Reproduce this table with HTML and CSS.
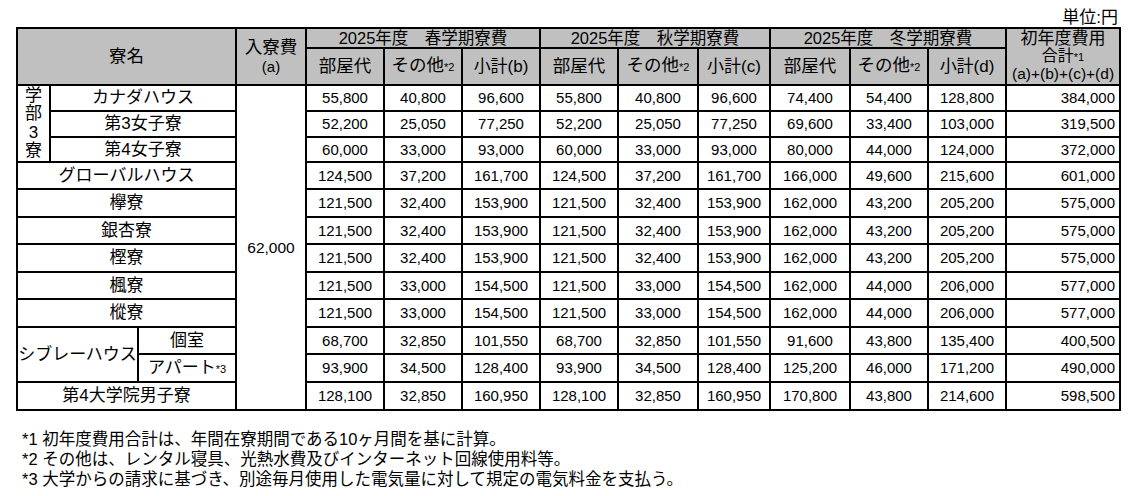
FILE: index.html
```html
<!DOCTYPE html>
<html lang="ja">
<head>
<meta charset="utf-8">
<title>寮費一覧</title>
<link rel="stylesheet" href="styles.css">
</head>
<body>
<div class="page">
  <div class="unit">単位:円</div>
  <table class="fees">
    <colgroup>
      <col class="c-a"><col class="c-b"><col class="c-c"><col class="c-d">
      <col class="c-n"><col class="c-n"><col class="c-n">
      <col class="c-n"><col class="c-n2"><col class="c-n3">
      <col class="c-n2"><col class="c-n"><col class="c-n">
      <col class="c-t">
    </colgroup>
    <thead>
      <tr class="h1">
        <th colspan="3" rowspan="2" class="big">寮名</th>
        <th rowspan="2" class="entry"><span class="big">入寮費</span><br><span class="sub">(a)</span></th>
        <th colspan="3">2025年度　春学期寮費</th>
        <th colspan="3">2025年度　秋学期寮費</th>
        <th colspan="3">2025年度　冬学期寮費</th>
        <th rowspan="2" class="total-h"><span class="tl">初年度費用</span><span class="tl mid">合計<small>*1</small></span><span class="tl formula">(a)+(b)+(c)+(d)</span></th>
      </tr>
      <tr class="h2">
        <th class="big">部屋代</th><th class="big">その他<small>*2</small></th><th class="sum">小計(b)</th>
        <th class="big">部屋代</th><th class="big">その他<small>*2</small></th><th class="sum">小計(c)</th>
        <th class="big">部屋代</th><th class="big">その他<small>*2</small></th><th class="sum">小計(d)</th>
      </tr>
    </thead>
    <tbody>
      <tr class="r26">
        <td rowspan="3" class="vert">学<br>部<br>3<br>寮</td>
        <td colspan="2" class="name">カナダハウス</td>
        <td rowspan="12" class="entry-v">62,000</td>
        <td>55,800</td><td>40,800</td><td>96,600</td>
        <td>55,800</td><td>40,800</td><td>96,600</td>
        <td>74,400</td><td>54,400</td><td>128,800</td>
        <td class="tot">384,000</td>
      </tr>
      <tr class="r26">
        <td colspan="2" class="name">第3女子寮</td>
        <td>52,200</td><td>25,050</td><td>77,250</td>
        <td>52,200</td><td>25,050</td><td>77,250</td>
        <td>69,600</td><td>33,400</td><td>103,000</td>
        <td class="tot">319,500</td>
      </tr>
      <tr class="r25">
        <td colspan="2" class="name">第4女子寮</td>
        <td>60,000</td><td>33,000</td><td>93,000</td>
        <td>60,000</td><td>33,000</td><td>93,000</td>
        <td>80,000</td><td>44,000</td><td>124,000</td>
        <td class="tot">372,000</td>
      </tr>
      <tr class="r27">
        <td colspan="3" class="name">グローバルハウス</td>
        <td>124,500</td><td>37,200</td><td>161,700</td>
        <td>124,500</td><td>37,200</td><td>161,700</td>
        <td>166,000</td><td>49,600</td><td>215,600</td>
        <td class="tot">601,000</td>
      </tr>
      <tr class="r28">
        <td colspan="3" class="name">欅寮</td>
        <td>121,500</td><td>32,400</td><td>153,900</td>
        <td>121,500</td><td>32,400</td><td>153,900</td>
        <td>162,000</td><td>43,200</td><td>205,200</td>
        <td class="tot">575,000</td>
      </tr>
      <tr class="r27">
        <td colspan="3" class="name">銀杏寮</td>
        <td>121,500</td><td>32,400</td><td>153,900</td>
        <td>121,500</td><td>32,400</td><td>153,900</td>
        <td>162,000</td><td>43,200</td><td>205,200</td>
        <td class="tot">575,000</td>
      </tr>
      <tr class="r28">
        <td colspan="3" class="name">樫寮</td>
        <td>121,500</td><td>32,400</td><td>153,900</td>
        <td>121,500</td><td>32,400</td><td>153,900</td>
        <td>162,000</td><td>43,200</td><td>205,200</td>
        <td class="tot">575,000</td>
      </tr>
      <tr class="r27">
        <td colspan="3" class="name">楓寮</td>
        <td>121,500</td><td>33,000</td><td>154,500</td>
        <td>121,500</td><td>33,000</td><td>154,500</td>
        <td>162,000</td><td>44,000</td><td>206,000</td>
        <td class="tot">577,000</td>
      </tr>
      <tr class="r28">
        <td colspan="3" class="name">樅寮</td>
        <td>121,500</td><td>33,000</td><td>154,500</td>
        <td>121,500</td><td>33,000</td><td>154,500</td>
        <td>162,000</td><td>44,000</td><td>206,000</td>
        <td class="tot">577,000</td>
      </tr>
      <tr class="r27">
        <td colspan="2" rowspan="2" class="name">シブレーハウス</td>
        <td class="name">個室</td>
        <td>68,700</td><td>32,850</td><td>101,550</td>
        <td>68,700</td><td>32,850</td><td>101,550</td>
        <td>91,600</td><td>43,800</td><td>135,400</td>
        <td class="tot">400,500</td>
      </tr>
      <tr class="r28">
        <td class="name">アパート<small>*3</small></td>
        <td>93,900</td><td>34,500</td><td>128,400</td>
        <td>93,900</td><td>34,500</td><td>128,400</td>
        <td>125,200</td><td>46,000</td><td>171,200</td>
        <td class="tot">490,000</td>
      </tr>
      <tr class="r28">
        <td colspan="3" class="name">第4大学院男子寮</td>
        <td>128,100</td><td>32,850</td><td>160,950</td>
        <td>128,100</td><td>32,850</td><td>160,950</td>
        <td>170,800</td><td>43,800</td><td>214,600</td>
        <td class="tot">598,500</td>
      </tr>
    </tbody>
  </table>
  <div class="notes">
    <p>*1 初年度費用合計は、年間在寮期間である10ヶ月間を基に計算。</p>
    <p>*2 その他は、レンタル寝具、光熱水費及びインターネット回線使用料等。</p>
    <p>*3 大学からの請求に基づき、別途毎月使用した電気量に対して規定の電気料金を支払う。</p>
  </div>
</div>
</body>
</html>
```

FILE: styles.css
```css
html, body {
  margin: 0;
  padding: 0;
  background: #ffffff;
}

body {
  font-family: "Liberation Sans", "Noto Sans CJK JP", sans-serif;
  color: #000000;
}

.page {
  width: 1103px;
  padding: 8px 0 0 16px;
}

.unit {
  text-align: right;
  font-size: 17px;
  line-height: 19px;
  height: 19px;
  padding-right: 1px;
}

.fees {
  border-collapse: collapse;
  table-layout: fixed;
  width: 1103px;
  border: 2px solid #000;
  font-size: 15px;
}

.c-a { width: 33px; }
.c-b { width: 88px; }
.c-c { width: 98px; }
.c-d { width: 70px; }
.c-n { width: 78px; }
.c-n2 { width: 80px; }
.c-n3 { width: 72px; }
.c-t { width: 114px; }

.fees th,
.fees td {
  border: 2px solid #000;
  padding: 0;
  text-align: center;
  vertical-align: middle;
  white-space: nowrap;
  overflow: hidden;
}

.fees thead th {
  background: #c0c0c0;
  font-weight: normal;
  font-size: 16.5px;
  line-height: 17px;
}

.fees .h1 { height: 20px; }
.fees .h1 th { border-bottom-width: 1px; }
.fees .h2 { height: 37px; }

.fees th.big,
.fees .big {
  font-size: 17.5px;
}

.fees th.sum {
  font-size: 17px;
}

.fees .entry {
  line-height: 19px;
}

.fees .sub {
  font-size: 15px;
}

.fees small {
  font-size: 11px;
}

.fees .total-h {
  font-size: 17px;
}

.fees .total-h .tl {
  display: block;
  line-height: 18px;
  height: 18px;
}

.fees .total-h .mid {
  font-size: 16px;
  line-height: 16px;
  height: 17px;
}

.fees .total-h .formula {
  font-size: 15.5px;
  line-height: 18px;
  height: 18px;
}

.fees .r25 { height: 25px; }
.fees .r26 { height: 26px; }
.fees .r27 { height: 27px; }
.fees .r28 { height: 28px; }

.fees td {
  line-height: 18px;
}

.fees td.name {
  font-size: 17px;
}

.fees td.vert {
  font-size: 17px;
  line-height: 18.5px;
}

.fees td.entry-v {
  font-size: 15.5px;
}

.fees td.tot {
  text-align: right;
  padding-right: 4px;
}

.notes {
  margin-top: 18px;
  padding-left: 6px;
  font-size: 16.5px;
  line-height: 20px;
}

.notes p {
  margin: 0;
}
```
